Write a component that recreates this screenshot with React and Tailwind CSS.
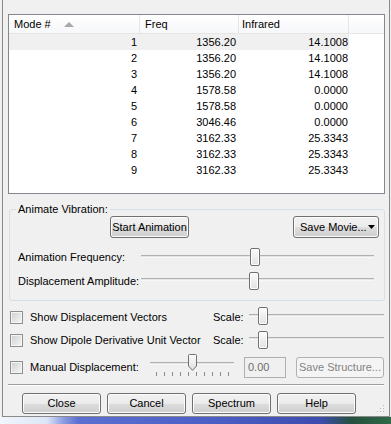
import React from "react";

const rows = [
  ["1", "1356.20", "14.1008"],
  ["2", "1356.20", "14.1008"],
  ["3", "1356.20", "14.1008"],
  ["4", "1578.58", "0.0000"],
  ["5", "1578.58", "0.0000"],
  ["6", "3046.46", "0.0000"],
  ["7", "3162.33", "25.3343"],
  ["8", "3162.33", "25.3343"],
  ["9", "3162.33", "25.3343"],
];

const btn =
  "flex items-center justify-center rounded-[3px] border border-[#707070] bg-[linear-gradient(#f2f2f2_0%,#ebebeb_50%,#dddddd_51%,#cfcfcf_100%)] shadow-[inset_0_0_0_1px_#fcfcfc] text-black";

function Track({ top }) {
  return (
    <div
      className={
        "absolute left-0 right-0 h-[3px] border-t border-t-[#b0b0b0] border-b border-b-[#f7f7f7] bg-[#e4e4e4] " +
        top
      }
    />
  );
}

function Thumb({ pos }) {
  return (
    <div
      className={
        "absolute w-[10px] h-[18px] rounded-[2px] border border-[#707070] bg-[linear-gradient(#fbfbfb,#e2e2e2)] shadow-[inset_0_0_0_1px_#ffffff] " +
        pos
      }
    />
  );
}

function Check() {
  return (
    <div className="w-[13px] h-[13px] shrink-0 border border-[#8e8f8f] bg-[linear-gradient(135deg,#cfcfcf,#f7f7f7)] shadow-[inset_0_0_0_1px_#f4f4f4]" />
  );
}

export default function App() {
  return (
    <div className="w-[391px] h-[424px] flex flex-col bg-[#f0f0f0] overflow-hidden font-['Liberation_Sans',Arial,sans-serif] text-[11px] leading-[13px] text-black">
      <div className="relative ml-[2px] w-[388px] h-[417px] shrink-0 border-x border-b border-[#8a8a8a] flex flex-col">
        {/* List view */}
        <div className="mt-[14px] ml-[5px] w-[377px] h-[180px] border border-[#828790] bg-white flex flex-col">
          <div className="h-[19px] flex border-b border-[#e5e5e5] bg-[linear-gradient(#ffffff,#f6f7f9)]">
            <div className="w-[131px] relative flex items-center pl-[5px] border-r border-[#e3e6ea]">
              Mode #
              <svg className="absolute left-[55px] top-[7px]" width="10" height="5" viewBox="0 0 10 5">
                <polygon points="0,5 5,0 10,5" fill="#a7a7a7" />
              </svg>
            </div>
            <div className="w-[99px] flex items-center pl-[5px] border-r border-[#e3e6ea]">Freq</div>
            <div className="w-[110px] flex items-center pl-[3px] border-r border-[#e3e6ea]">Infrared</div>
            <div className="flex-1" />
          </div>
          {rows.map((r, i) => (
            <div key={i} className="h-[16px] flex">
              <div className={"flex " + (i === 0 ? "bg-[#f0f0f0]" : "")}>
                <div className="w-[131px] text-right pr-[3px] leading-[16px]">{r[0]}</div>
                <div className="w-[99px] text-right pr-[3px] leading-[16px]">{r[1]}</div>
                <div className="w-[110px] text-right pr-[1px] leading-[16px]">{r[2]}</div>
              </div>
            </div>
          ))}
        </div>

        {/* Group box */}
        <div className="relative mt-[15px] ml-[6px] w-[376px] h-[92px] border border-[#d5dfe5] rounded-[3px] flex flex-col">
          <div className="absolute left-[6px] -top-[7px] px-[2px] bg-[#f0f0f0]">Animate Vibration:</div>
          <div className="mt-[6px] h-[22px] flex">
            <div className={btn + " ml-[100px] w-[79px]"}>Start Animation</div>
            <div className={btn + " ml-[104px] w-[86px] relative justify-start pl-[6px]"}>
              Save Movie...
              <svg className="absolute right-[3px] top-[8px]" width="7" height="4" viewBox="0 0 7 4">
                <polygon points="0,0 7,0 3.5,4" fill="#000" />
              </svg>
            </div>
          </div>
          <div className="mt-[9px] h-[20px] flex items-center">
            <div className="w-[131px] pl-[8px]">Animation Frequency:</div>
            <div className="relative w-[233px] h-[20px]">
              <Track top="top-[8px]" />
              <Thumb pos="left-[109px] top-[1px]" />
            </div>
          </div>
          <div className="mt-[4px] h-[20px] flex items-center">
            <div className="w-[131px] pl-[8px]">Displacement Amplitude:</div>
            <div className="relative w-[233px] h-[20px]">
              <Track top="top-[7px]" />
              <Thumb pos="left-[108px] top-[1px]" />
            </div>
          </div>
        </div>

        {/* Checkbox rows */}
        <div className="mt-[6px] h-[20px] flex items-center">
          <div className="ml-[7px]"><Check /></div>
          <div className="ml-[7px] w-[183px]">Show Displacement Vectors</div>
          <div className="w-[36px]">Scale:</div>
          <div className="relative w-[135px] h-[20px]">
            <Track top="top-[7px]" />
            <Thumb pos="left-[9px] top-0" />
          </div>
        </div>
        <div className="mt-[3px] h-[20px] flex items-center">
          <div className="ml-[7px]"><Check /></div>
          <div className="ml-[7px] w-[183px]">Show Dipole Derivative Unit Vector</div>
          <div className="w-[36px]">Scale:</div>
          <div className="relative w-[135px] h-[20px]">
            <Track top="top-[7px]" />
            <Thumb pos="left-[9px] top-[1px]" />
          </div>
        </div>
        <div className="mt-[6px] h-[22px] flex items-center">
          <div className="ml-[7px]"><Check /></div>
          <div className="ml-[7px] w-[120px]">Manual Displacement:</div>
          <div className="relative w-[84px] h-[22px]">
            <Track top="top-[6px]" />
            <svg className="absolute left-[38px] -top-[2px]" width="9" height="17" viewBox="0 0 9 17">
              <defs>
                <linearGradient id="pg" x1="0" y1="0" x2="0" y2="1">
                  <stop offset="0" stopColor="#fbfbfb" />
                  <stop offset="1" stopColor="#e0e0e0" />
                </linearGradient>
              </defs>
              <path d="M0.5 1.5 Q0.5 0.5 1.5 0.5 H7.5 Q8.5 0.5 8.5 1.5 V12 L4.5 16.3 L0.5 12 Z" fill="url(#pg)" stroke="#707070" strokeWidth="1" />
            </svg>
            <div className="absolute left-[6px] top-[16px] flex gap-[7px]">
              {Array.from({ length: 10 }).map((_, i) => (
                <div key={i} className="w-[1px] h-[4px] bg-[#8a8a8a]" />
              ))}
            </div>
          </div>
          <div className="ml-[10px] w-[42px] h-[21px] border border-[#afafaf] bg-[#f0f0f0] text-[#6d6d6d] flex items-center pl-[3px]">0.00</div>
          <div className="ml-[10px] w-[88px] h-[21px] rounded-[3px] border border-[#adb2b5] bg-[#f4f4f4] text-[#838383] flex items-center justify-center">Save Structure...</div>
        </div>

        {/* Separator */}
        <div className="mt-[6px] ml-[5px] w-[376px] h-[2px] border-t border-[#a0a0a0] border-b border-b-white" />

        {/* Bottom buttons */}
        <div className="mt-[7px] ml-[19px] flex gap-[6px]">
          <div className={btn + " w-[79px] h-[21px]"}>Close</div>
          <div className={btn + " w-[79px] h-[21px]"}>Cancel</div>
          <div className={btn + " w-[79px] h-[21px]"}>Spectrum</div>
          <div className={btn + " w-[79px] h-[21px]"}>Help</div>
        </div>

        {/* Resize grip */}
        <svg className="absolute right-[4px] bottom-[3px]" width="8" height="8" viewBox="0 0 8 8">
          <rect x="6" y="0" width="1" height="1" fill="#b8b8b8" />
          <rect x="3" y="3" width="1" height="1" fill="#b8b8b8" />
          <rect x="6" y="3" width="1" height="1" fill="#b8b8b8" />
          <rect x="0" y="6" width="1" height="1" fill="#b8b8b8" />
          <rect x="3" y="6" width="1" height="1" fill="#b8b8b8" />
          <rect x="6" y="6" width="1" height="1" fill="#b8b8b8" />
        </svg>
      </div>
      <div className="flex-1 bg-[linear-gradient(90deg,#f2f6fc_0%,#dce6f6_12%,#8fa0e2_16%,#5b6fd2_20%,#4b5ec6_55%,#3d4cae_82%,#24503e_90%,#2f6a48_100%)]" />
    </div>
  );
}
